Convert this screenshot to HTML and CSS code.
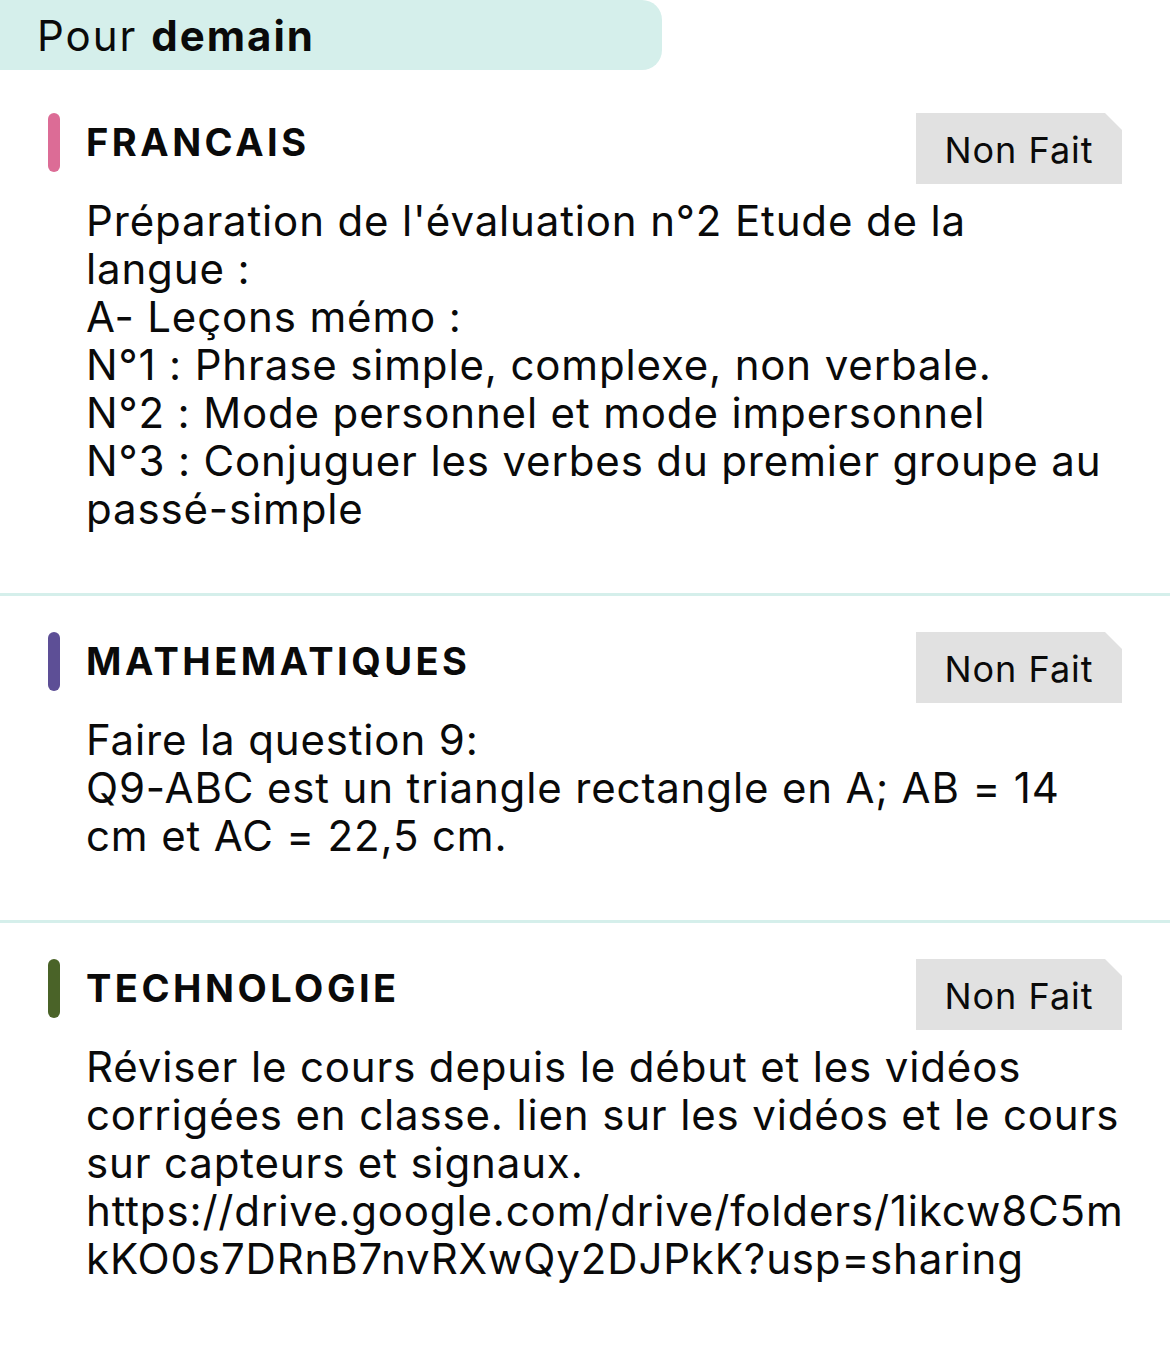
FILE: index.html
```html
<!DOCTYPE html>
<html lang="fr">
<head>
<meta charset="utf-8">
<link rel="stylesheet" href="styles.css">
</head>
<body>
<header class="day-bar"><span class="day-label">Pour <b>demain</b></span></header>
<main class="tasks">
  <section class="task task-first">
    <div class="task-head">
      <span class="subject-mark mark-pink"></span>
      <h2 class="subject">FRANCAIS</h2>
      <span class="status">Non Fait</span>
    </div>
    <p class="task-body">Préparation de l'évaluation n°2 Etude de la langue&nbsp;:<br>A- Leçons mémo&nbsp;:<br>N°1&nbsp;: Phrase simple, complexe, non verbale.<br>N°2&nbsp;: Mode personnel et mode impersonnel<br>N°3&nbsp;: Conjuguer les verbes du premier groupe au passé-simple</p>
  </section>
  <div class="divider"></div>
  <section class="task">
    <div class="task-head">
      <span class="subject-mark mark-purple"></span>
      <h2 class="subject">MATHEMATIQUES</h2>
      <span class="status">Non Fait</span>
    </div>
    <p class="task-body">Faire la question 9:<br>Q9-ABC est un triangle rectangle en A; AB = 14 cm et AC = 22,5 cm.</p>
  </section>
  <div class="divider"></div>
  <section class="task">
    <div class="task-head">
      <span class="subject-mark mark-green"></span>
      <h2 class="subject">TECHNOLOGIE</h2>
      <span class="status">Non Fait</span>
    </div>
    <p class="task-body">Réviser le cours depuis le début et les vidéos corrigées en classe. lien sur les vidéos et le cours sur capteurs et signaux. https://drive.google.com/drive/folders/1ikcw8C5mkKO0s7DRnB7nvRXwQy2DJPkK?usp=sharing</p>
  </section>
</main>
</body>
</html>
```
FILE: styles.css
```css
* { box-sizing: border-box; }
html, body { margin: 0; padding: 0; background: #fff; }
body {
  font-family: "Inter", "Noto Sans", sans-serif;
  color: #0a0a0a;
  width: 1170px;
}
.day-bar {
  width: 662px;
  height: 70px;
  background: #d5efeb;
  border-radius: 0 20px 20px 0;
  display: flex;
  align-items: center;
  padding-left: 37px;
}
.day-label {
  font-size: 42px;
  font-weight: 400;
  letter-spacing: 2px;
}
.day-label b { font-weight: 700; }
.task { padding: 36px 48px 60px 48px; }
.task-first { padding-top: 43px; }
.task-head {
  display: flex;
  align-items: flex-start;
}
.subject-mark {
  width: 12px;
  height: 59px;
  border-radius: 6px;
  flex: none;
}
.mark-pink { background: #dc6c96; }
.mark-purple { background: #5d4f96; }
.mark-green { background: #4a6328; }
.subject {
  margin: 0 0 0 26px;
  font-size: 38px;
  font-weight: 700;
  line-height: 59px;
  letter-spacing: 3.5px;
}
.status {
  margin-left: auto;
  width: 206px;
  height: 71px;
  background: #e1e1e1;
  display: flex;
  align-items: center;
  justify-content: center;
  font-size: 36px;
  letter-spacing: 1px;
  padding-top: 2px;
  clip-path: polygon(0 0, 189px 0, 100% 17px, 100% 100%, 0 100%);
}
.task-body {
  margin: 13px -4px 0 38px;
  font-size: 42px;
  line-height: 48px;
  overflow-wrap: break-word;
  letter-spacing: 0.85px;
}
.divider {
  height: 3px;
  background: #d5efeb;
}
```
